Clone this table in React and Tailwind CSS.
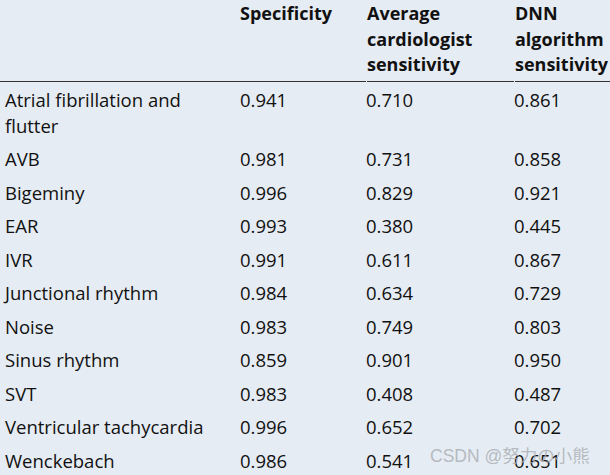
import React from "react";

const rows = [
  ["Atrial fibrillation and flutter", "0.941", "0.710", "0.861"],
  ["AVB", "0.981", "0.731", "0.858"],
  ["Bigeminy", "0.996", "0.829", "0.921"],
  ["EAR", "0.993", "0.380", "0.445"],
  ["IVR", "0.991", "0.611", "0.867"],
  ["Junctional rhythm", "0.984", "0.634", "0.729"],
  ["Noise", "0.983", "0.749", "0.803"],
  ["Sinus rhythm", "0.859", "0.901", "0.950"],
  ["SVT", "0.983", "0.408", "0.487"],
  ["Ventricular tachycardia", "0.996", "0.652", "0.702"],
  ["Wenckebach", "0.986", "0.541", "0.651"],
];

const App = () => {
  return (
    <div className="relative w-[610px] h-[475px] overflow-hidden bg-[#e6ecf3] text-[#111] font-['Open_Sans','Liberation_Sans',sans-serif]">
      {/* header */}
      <div className="grid grid-cols-[240px_126px_148px_1fr] pt-[1px] text-[18px] font-bold leading-[25.5px]">
        <div className="border-b-[1.5px] border-[#333] pb-[3px]"></div>
        <div className="border-b-[1.5px] border-[#333] pb-[3px]">Specificity</div>
        <div className="border-b-[1.5px] border-[#333] pb-[3px] ml-[1px]">
          Average<br />cardiologist<br />sensitivity
        </div>
        <div className="border-b-[1.5px] border-[#333] pb-[3px] ml-[1px]">
          DNN<br />algorithm<br />sensitivity
        </div>
      </div>

      {/* body */}
      <div className="text-[18.5px] leading-[26px]">
        {rows.map((r, i) => (
          <div key={i} className="grid grid-cols-[240px_126px_148px_1fr] pt-[5px] pb-[2.5px]">
            <div className="pl-[5px] pr-[20px]">{r[0]}</div>
            <div>{r[1]}</div>
            <div>{r[2]}</div>
            <div>{r[3]}</div>
          </div>
        ))}
      </div>

      {/* watermark */}
      <div className="absolute left-[430px] top-[443px] text-[17.5px] text-[#a8adb2]/80 font-['Liberation_Sans','Noto_Sans_CJK_SC',sans-serif]">
        CSDN @努力の小熊
      </div>
    </div>
  );
};

export default App;
